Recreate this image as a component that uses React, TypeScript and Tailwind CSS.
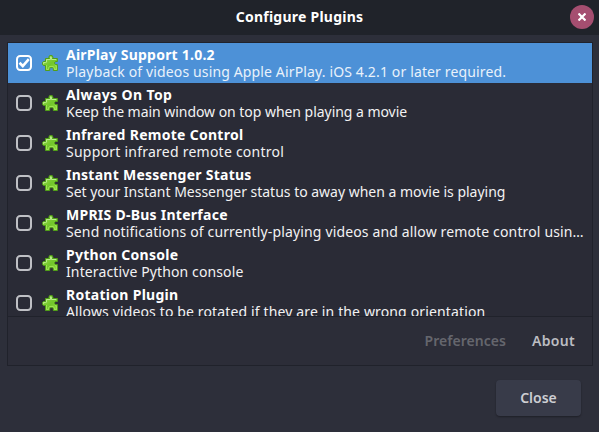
const font = { fontFamily: '"Noto Sans", "Open Sans", sans-serif' };

type Plugin = {
  name: string;
  description: string;
  nameClass: string;
  descClass: string;
  enabled?: boolean;
};

const plugins: Plugin[] = [
  { name: 'AirPlay Support 1.0.2', description: 'Playback of videos using Apple AirPlay. iOS 4.2.1 or later required.', nameClass: 'tracking-[0.22px]', descClass: 'tracking-[0.14px]', enabled: true },
  { name: 'Always On Top', description: 'Keep the main window on top when playing a movie', nameClass: 'tracking-[0.38px]', descClass: 'tracking-[-0.04px]' },
  { name: 'Infrared Remote Control', description: 'Support infrared remote control', nameClass: 'tracking-[0.28px]', descClass: 'tracking-[0.24px]' },
  { name: 'Instant Messenger Status', description: 'Set your Instant Messenger status to away when a movie is playing', nameClass: 'tracking-[0.26px]', descClass: 'tracking-[-0.01px]' },
  { name: 'MPRIS D-Bus Interface', description: 'Send notifications of currently-playing videos and allow remote control usin…', nameClass: 'tracking-[0.26px]', descClass: 'tracking-[0.145px]' },
  { name: 'Python Console', description: 'Interactive Python console', nameClass: 'tracking-[0.28px]', descClass: 'tracking-[0.12px]' },
  { name: 'Rotation Plugin', description: 'Allows videos to be rotated if they are in the wrong orientation', nameClass: 'tracking-[0.28px]', descClass: 'tracking-[0.14px]' },
];

function PuzzleIcon() {
  return (
    <svg className="ml-[10px] size-4 shrink-0" viewBox="0 0 16 16" fill="none">
      <defs>
        <linearGradient id="piece" x1="0" y1="0" x2="1" y2="1">
          <stop offset="0" stopColor="#9be052" />
          <stop offset="0.55" stopColor="#72c62a" />
          <stop offset="1" stopColor="#8fdc3f" />
        </linearGradient>
      </defs>
      <path
        d="M3.5 3.5H7.5L6.8 2.3L7.6 .6H10.2L11 2.3L10.5 3.5H15.4V6.5H13.6L12.7 7.3V8.8L13.6 9.6H15.4V15.5H11.3V13.5L10.4 12.7H8.6L7.7 13.5V15.5H3.5V10.5H1.5L.6 9.6V7.3L1.5 6.5H3.5Z"
        fill="url(#piece)" stroke="#519e18" strokeLinejoin="round"
      />
      <path d="M4.5 7.5V4.5H8.5V2L9 1.7L9.5 2.2V4.5H14.3M1.6 9V7.5H3.8" stroke="#c0ee92" strokeOpacity="0.9" />
      <path d="M13 10.7H14.4V14.5H12.4V12.7L11 11.5H7.5L6.7 12.5V14.5H4.5V10" stroke="#a5e65a" strokeOpacity="0.85" />
    </svg>
  );
}

function CheckBox({ checked }: { checked?: boolean }) {
  return (
    <svg className="size-4 shrink-0" viewBox="0 0 16 16" fill="none">
      <rect x="1" y="1" width="14" height="14" rx="3.2" stroke={checked ? '#ffffff' : '#bfc0c5'} strokeWidth="2" />
      {checked && <path d="M3.5 7.8L6.8 11L12.8 4.2" stroke="#fff" strokeWidth="2.6" />}
    </svg>
  );
}

export default function App() {
  return (
    <div className="flex h-[432px] w-[599px] flex-col overflow-hidden bg-[#2d2f3a] text-white" style={font}>
      <header className="grid h-[35px] shrink-0 grid-cols-[1fr_auto_1fr] items-center bg-[#20232a] pr-[5px] pl-[5px]">
        <span />
        <h1 className="pb-0.5 text-[14px] leading-5 font-bold tracking-[0.24px] whitespace-nowrap">Configure Plugins</h1>
        <button className="mb-px flex size-6 items-center justify-center justify-self-end rounded-full bg-[#a54e70]">
          <svg className="size-2" viewBox="0 0 8 8"><path d="M.5 .5L7.5 7.5M7.5 .5L.5 7.5" stroke="#fff" strokeWidth="2.2" /></svg>
        </button>
      </header>
      <main className="mx-[7px] mt-[7px] flex h-[324px] w-[586px] shrink-0 flex-col border border-[#20222b] bg-[#2a2b36]">
        <ul className="h-[273px] shrink-0 overflow-hidden">
          {plugins.map((p) => (
            <li key={p.name} className={`flex h-10 items-center pl-2 ${p.enabled ? 'bg-[#4d91d7]' : ''}`}>
              <CheckBox checked={p.enabled} />
              <PuzzleIcon />
              <div className="ml-2 text-[14px] leading-[17px] whitespace-nowrap">
                <div className={`font-bold ${p.nameClass}`}>{p.name}</div>
                <div className={`${p.descClass} ${p.enabled ? 'text-[#e9f2fb]' : 'text-[#f2f2f3]'}`}>{p.description}</div>
              </div>
            </li>
          ))}
        </ul>
        <div className="flex flex-1 items-center justify-end gap-[26px] border-t border-[#20222b] bg-[#2c2d38] pr-[17px] pb-0.5 text-[14px] font-semibold">
          <button className="tracking-[0.05px] text-[#65666d]">Preferences</button>
          <button className="tracking-[0.3px] text-[#bcbdc2]">About</button>
        </div>
      </main>
      <footer className="mt-[14px] flex justify-end pr-[18px]">
        <button className="h-9 w-[85px] rounded bg-[#383b49] pb-0.5 text-[14px] font-semibold text-[#cdced3] shadow-[0_1px_2px_rgba(0,0,0,0.35)]">Close</button>
      </footer>
    </div>
  );
}
